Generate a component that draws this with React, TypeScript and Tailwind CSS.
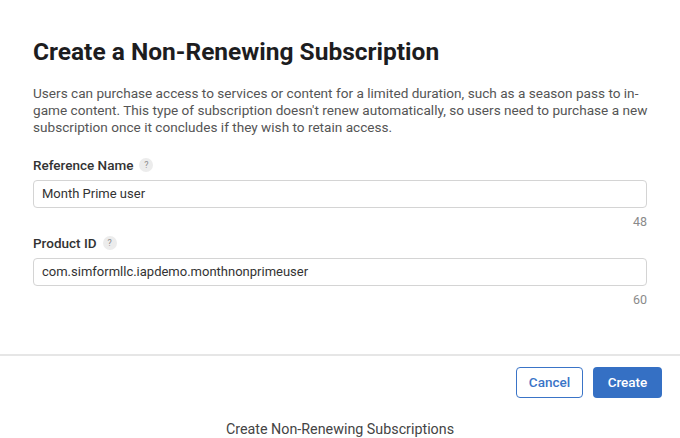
import React from 'react';

const font = { fontFamily: 'Roboto, "Noto Sans", Arial, sans-serif' };

function HelpBadge() {
  return (
    <span className="ml-[6px] inline-flex h-[14px] w-[14px] items-center justify-center rounded-full bg-[#ececec] text-[9px] font-normal leading-none text-[#8c8c8c]">
      ?
    </span>
  );
}

interface FieldProps {
  label: string;
  value: string;
  limit: number;
  className?: string;
}

function Field({ label, value, limit, className = '' }: FieldProps) {
  return (
    <div className={className}>
      <label className="flex h-[18px] items-center text-[13.5px] font-medium text-[#333]">
        {label}
        <HelpBadge />
      </label>
      <div className="mt-[6px] flex h-[28px] items-center rounded-[4px] border border-[#d4d4d4] bg-white px-[8px] text-[13px] text-[#333]">
        {value}
      </div>
      <div className="mt-[6px] h-[16px] text-right text-[12.5px] leading-[16px] text-[#8a8a8a]">{limit}</div>
    </div>
  );
}

export default function App() {
  return (
    <div className="h-[438px] w-[680px] overflow-hidden bg-white" style={font}>
      <div className="px-[33px] pt-[38px]">
        <h1 className="text-[24.5px] font-bold leading-[28px] text-[#1d1d1f]">
          Create a Non-Renewing Subscription
        </h1>
        <p className="mt-[19px] mr-[-8px] text-[13.6px] leading-[17px] text-[#555]">
          Users can purchase access to services or content for a limited duration, such as a season pass to in-game
          content. This type of subscription doesn't renew automatically, so users need to purchase a new subscription
          once it concludes if they wish to retain access.
        </p>
        <Field className="mt-[20px]" label="Reference Name" value="Month Prime user" limit={48} />
        <Field className="mt-[4px]" label="Product ID" value="com.simformllc.iapdemo.monthnonprimeuser" limit={60} />
      </div>

      <div className="mt-[46px] flex justify-end gap-[10px] border-t-2 border-t-[#e6e6e6] pb-[9px] pr-[18px] pt-[11px]">
        <button className="h-[31px] w-[67px] rounded-[4px] border border-[#3a74c7] bg-white text-[13.5px] font-medium text-[#3a74c7]">
          Cancel
        </button>
        <button className="h-[31px] w-[69px] rounded-[4px] bg-[#3570c4] text-[13.5px] font-medium text-white">
          Create
        </button>
      </div>

      <div className="mt-[13px] text-center text-[14.3px] leading-[18px] text-[#444]">
        Create Non-Renewing Subscriptions
      </div>
    </div>
  );
}
